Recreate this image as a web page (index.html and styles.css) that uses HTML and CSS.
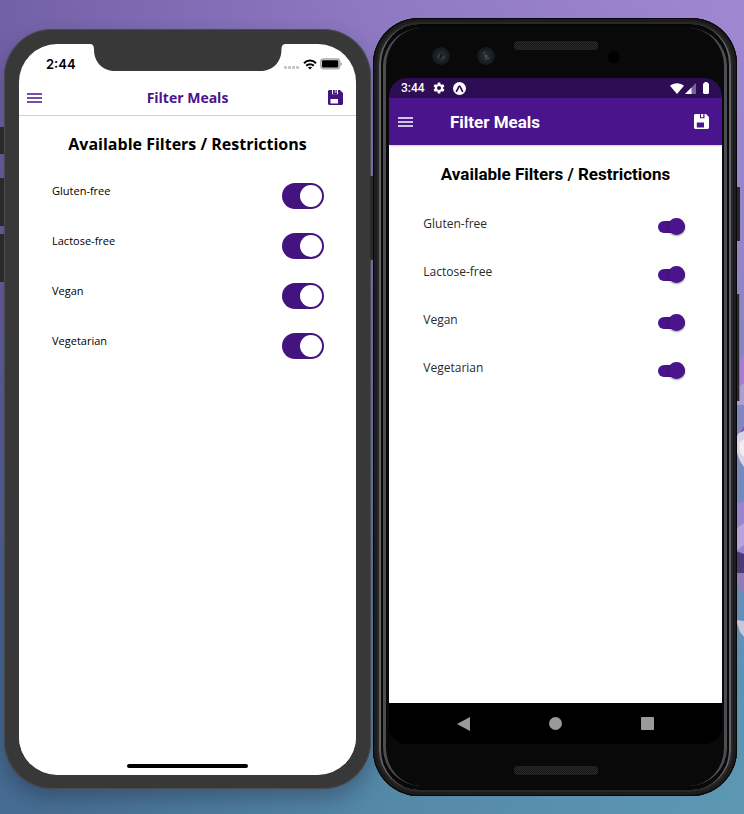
FILE: index.html
```html
<!DOCTYPE html>
<html lang="en">
<head>
<meta charset="utf-8">
<meta name="viewport" content="width=device-width, initial-scale=1">
<title>Filter Meals</title>
<link rel="stylesheet" href="styles.css">
</head>
<body>
<svg class="blossom" viewBox="0 0 10 300" aria-hidden="true">
  <path fill="#aa7bd2" d="M10 10L6 16 4 30 2 36V60H10z"/>
  <path fill="#aaa0cf" d="M2 44L10 38V60H2z"/>
  <path fill="#d9d3ea" d="M10 80L5 88 2 92 3 108 6 116 10 122z"/>
  <path fill="#7c62b4" d="M10 80L5 88 10 86z"/>
  <path fill="#f2ecef" d="M10 94L5 98 6 108 10 112z"/>
  <path fill="#9a84cd" d="M2 158L10 157V210H2z"/>
  <path fill="#b8a2dc" d="M2 184L10 178V200L2 206z"/>
  <path fill="#4e3977" d="M2 206L10 209V228H2z"/>
  <path fill="#8d7db1" d="M2 228H10V248L6 246 2 236z"/>
  <path fill="#c9c6d8" d="M2 275L10 276V292L6 287z"/>
</svg>
<main class="desktop">
  <section class="phone ios" aria-label="iOS">
    <i class="key key-mute"></i><i class="key key-up"></i><i class="key key-down"></i><i class="key key-side"></i>
    <div class="screen">
      <div class="notch"><svg viewBox="0 0 197 27" preserveAspectRatio="none" aria-hidden="true"><path fill="#383838" d="M0 0H197Q193 0 193 5C193 19 184 27 171 27H26C13 27 4 19 4 5Q4 0 0 0Z"/></svg></div>
      <div class="status">
        <span class="clock">2:44</span>
        <div class="indicators">
          <svg width="16" height="4" viewBox="0 0 16 4" fill="#c4c4c4" aria-hidden="true"><rect width="3" height="3" rx="1"/><rect x="4" width="3" height="3" rx="1"/><rect x="8" width="3" height="3" rx="1"/><rect x="12" width="3" height="3" rx="1"/></svg>
          <svg class="wifi" width="14" height="11" viewBox="0 0 14 11" fill="none" stroke="#000" stroke-width="2" aria-hidden="true"><path d="M1 4.2C4.4.7 9.6.7 13 4.2M3.2 6.8C5.3 4.7 8.7 4.7 10.8 6.8"/><path fill="#000" stroke="none" d="M7 10.6L4.9 8.5C6 7.5 8 7.5 9.1 8.5Z"/></svg>
          <svg width="22" height="12" viewBox="0 0 22 12" aria-hidden="true"><rect x=".7" y=".9" width="19" height="10" rx="2.6" fill="#ccc" stroke="#aaa" stroke-width="1.2"/><rect x="2" y="2.3" width="16.2" height="7.2" rx="1.2"/><path fill="#888" d="M20.6 4V8Q21.8 7.4 21.8 6T20.6 4"/></svg>
        </div>
      </div>
      <header class="bar">
        <button class="icon-button" type="button" aria-label="Menu"><svg width="15" height="10" viewBox="0 0 15 10" stroke="#4a148c" stroke-width="1.5" aria-hidden="true"><path d="M0 1H15M0 5H15M0 9H15"/></svg></button>
        <h1>Filter Meals</h1>
        <button class="icon-button" type="button" aria-label="Save"><svg width="15" height="15" viewBox="0 0 15 15" aria-hidden="true"><path fill="#43137f" fill-rule="evenodd" d="M1 0H4V4.300H10V0H12L15 3V14L14 15H1L0 14V1ZM2.500 9V13.500H10V9Z"/><path fill="#43137f" d="M5 0H9V4.300H5Z"/><path fill="#a78fc9" d="M6.500 0H8.500V3H6.500Z"/></svg></button>
      </header>
      <div class="content">
        <h2>Available Filters / Restrictions</h2>
        <div class="filters">
          <div class="filter"><label for="ios-gluten">Gluten-free</label><input id="ios-gluten" type="checkbox" role="switch" checked></div>
          <div class="filter"><label for="ios-lactose">Lactose-free</label><input id="ios-lactose" type="checkbox" role="switch" checked></div>
          <div class="filter"><label for="ios-vegan">Vegan</label><input id="ios-vegan" type="checkbox" role="switch" checked></div>
          <div class="filter"><label for="ios-vegetarian">Vegetarian</label><input id="ios-vegetarian" type="checkbox" role="switch" checked></div>
        </div>
      </div>
      <div class="home-indicator"></div>
    </div>
  </section>

  <section class="phone android" aria-label="Android">
    <i class="key key-left"></i><i class="key key-power"></i><i class="key key-volume"></i>
    <div class="body">
      <div class="forehead">
        <svg class="cameras" width="64" height="20" viewBox="0 0 64 20" aria-hidden="true"><circle cx="9" cy="10" r="9" fill="#171c21"/><circle cx="9" cy="10" r="6" fill="#20262c"/><path d="M6 12L8 8M10 13L12 10" stroke="#41494f" stroke-width="1.500"/><circle cx="9" cy="10" r="1.500" fill="#11161a"/><circle cx="54" cy="10" r="9" fill="#171c21"/><circle cx="54" cy="10" r="6" fill="#20262c"/><path d="M53 13L57 12M51 8L53 6" stroke="#41494f" stroke-width="1.500"/><circle cx="54" cy="10" r="1.500" fill="#50575c"/></svg>
        <div class="speaker"></div>
        <div class="sensor"></div>
      </div>
      <div class="screen">
        <div class="status">
          <span class="clock">3:44</span>
          <svg width="12" height="12" viewBox="0 0 24 24" fill="#fff" aria-hidden="true"><path fill-rule="evenodd" d="M9.5 1h5l.6 3.5 2 1.1 3.3-1.2 2.5 4.3L20.200 11v2l2.700 2.300-2.500 4.300-3.300-1.200-2 1.100-.6 3.500h-5l-.6-3.500-2-1.100-3.300 1.200L1.100 15.300 3.800 13v-2L1.100 8.700l2.500-4.300 3.300 1.200 2-1.100zM12 8a4 4 0 1 0 0 8 4 4 0 0 0 0-8z"/></svg>
          <svg width="13" height="13" viewBox="0 0 13 13" aria-hidden="true"><circle cx="6.500" cy="6.500" r="6.500" fill="#fff"/><path d="M3.500 9.300C4.800 7.700 5.400 4.200 6.500 4.200S8.200 7.700 9.500 9.300" fill="none" stroke="#2d0d54" stroke-width="1.700" stroke-linecap="round"/></svg>
          <div class="indicators">
            <svg width="14" height="11" viewBox="0 0 14 11" aria-hidden="true"><path fill="#fff" d="M0 2.700C4-.700 10-.700 14 2.700L7 11Z"/></svg>
            <svg width="11" height="11" viewBox="0 0 11 11" aria-hidden="true"><path fill="#796593" d="M0 11L11 0V11Z"/><path fill="#fff" d="M0 11L6.500 4.500V11Z"/></svg>
            <svg class="battery" width="6" height="12" viewBox="0 0 6 12" aria-hidden="true"><path fill="#fff" d="M1.500 0H4.500V1H5L6 2V11L5 12H1L0 11V2L1 1H1.500Z"/></svg>
          </div>
        </div>
        <header class="bar">
          <button class="icon-button" type="button" aria-label="Menu"><svg width="15" height="10" viewBox="0 0 15 10" stroke="#fff" stroke-width="1.700" aria-hidden="true"><path d="M0 1H15M0 5H15M0 9H15"/></svg></button>
          <h1>Filter Meals</h1>
          <button class="icon-button" type="button" aria-label="Save"><svg width="15" height="15" viewBox="0 0 15 15" aria-hidden="true"><path fill="#fff" fill-rule="evenodd" d="M1 0H6V4.300H10.500V0H12L15 3V14L14 15H1L0 14V1ZM2.800 8.500V13.500H10V8.500Z"/><path fill="#fff" d="M7 0H9.300V3.300H7Z"/></svg></button>
        </header>
        <div class="content">
          <h2>Available Filters / Restrictions</h2>
          <div class="filters">
            <div class="filter"><label for="android-gluten">Gluten-free</label><input id="android-gluten" type="checkbox" role="switch" checked></div>
            <div class="filter"><label for="android-lactose">Lactose-free</label><input id="android-lactose" type="checkbox" role="switch" checked></div>
            <div class="filter"><label for="android-vegan">Vegan</label><input id="android-vegan" type="checkbox" role="switch" checked></div>
            <div class="filter"><label for="android-vegetarian">Vegetarian</label><input id="android-vegetarian" type="checkbox" role="switch" checked></div>
          </div>
        </div>
        <nav class="nav-bar" aria-label="System">
          <button class="icon-button" type="button" aria-label="Back"><svg width="13" height="14" viewBox="0 0 13 14" aria-hidden="true"><path fill="#9a9a9a" d="M13 0V14L0 7Z"/></svg></button>
          <button class="icon-button" type="button" aria-label="Home"><svg width="13" height="13" viewBox="0 0 13 13" aria-hidden="true"><circle cx="6.500" cy="6.500" r="6.500" fill="#9a9a9a"/></svg></button>
          <button class="icon-button" type="button" aria-label="Recent apps"><svg width="13" height="13" viewBox="0 0 13 13" aria-hidden="true"><rect width="13" height="13" rx="1" fill="#9a9a9a"/></svg></button>
        </nav>
      </div>
      <div class="chin"><div class="speaker"></div></div>
    </div>
  </section>
</main>
</body>
</html>
```
FILE: styles.css
```css
* { box-sizing: border-box; }

body {
  margin: 0;
  position: relative;
  overflow-x: hidden;
  background:
    linear-gradient(90deg, rgba(20, 15, 75, .32), rgba(20, 20, 80, .12) 50%, transparent),
    linear-gradient(180deg, #a087d2 0%, #9484c8 30%, #7f86c0 50%, #6a8bbb 68%, #5a93b4 85%, #5d98b2 100%);
}

h1, h2 { margin: 0; }

.blossom {
  position: absolute;
  right: 0;
  top: 345px;
  width: 10px;
  height: 300px;
}

.desktop {
  position: relative;
  min-height: 100vh;
  display: grid;
  grid-template-columns: 367fr 364fr;
  gap: 2px;
  padding: 0 7px 0 4px;
}

.phone {
  position: relative;
  display: flex;
}

.key {
  position: absolute;
  background: #2a2a2a;
  width: 4px;
}

.screen {
  position: relative;
  flex: 1;
  display: flex;
  flex-direction: column;
  overflow: hidden;
  background: #fff;
}

.status, .bar, .indicators { display: flex; align-items: center; }
.indicators { margin-left: auto; }

.icon-button {
  display: flex;
  padding: 0;
  border: 0;
  background: none;
}

.content {
  flex: 1;
  display: flex;
  flex-direction: column;
  align-items: center;
  background: #fff;
}

.filters {
  width: 80%;
  display: flex;
  flex-direction: column;
}

.filter {
  display: flex;
  justify-content: space-between;
  align-items: flex-start;
}

.filter input {
  appearance: none;
  position: relative;
  margin: 0;
  background: #4a148c;
}

.filter input::before {
  content: "";
  position: absolute;
  border-radius: 50%;
}

/* iOS */
.ios {
  margin: 29px 0 25px;
  padding: 15px 15px 14px;
  border-radius: 48px;
  background: #383838;
  box-shadow: inset 0 0 0 1px #4b4b4f, 0 10px 20px rgba(20, 20, 40, .3);
  font-family: "Open Sans", sans-serif;
}

.ios .key-mute { left: -4px; top: 98px; height: 27px; }
.ios .key-up { left: -4px; top: 149px; height: 48px; }
.ios .key-down { left: -4px; top: 205px; height: 48px; }
.ios .key-side { right: -2px; top: 147px; height: 83px; width: 3px; }

.ios .screen { border-radius: 38px; }

.notch {
  position: absolute;
  top: 0;
  left: 21%;
  right: 21%;
  height: 27px;
}

.notch svg { display: block; width: 100%; height: 100%; }

.ios .status {
  height: 36px;
  padding: 4px 14px 0 27px;
}

.ios .clock { font: 600 13px/16px Inter, sans-serif; }
.ios .indicators { gap: 3px; }
.ios .indicators svg:first-child { margin-top: 8px; }

.ios .bar {
  height: 36px;
  padding: 0 13px 0 8px;
  justify-content: space-between;
  border-bottom: 1px solid #d0d0d2;
}

.ios .bar h1 {
  padding-left: 5px;
  font-size: 14px;
  line-height: 20px;
  font-weight: 700;
  color: #4a148c;
}

.ios h2 {
  margin: 16px 0 27px;
  font-size: 16px;
  line-height: 24px;
  font-weight: 700;
}

.ios .filters { width: 81%; gap: 24px; }

.ios .filter label {
  padding-left: 1px;
  font-size: 11px;
  line-height: 16px;
}

.ios .filter input {
  width: 42px;
  height: 26px;
  border-radius: 13px;
  background: #43137f;
}

.ios .filter input::before {
  top: 2px;
  right: 2px;
  width: 22px;
  height: 22px;
  background: #fff;
}

.home-indicator {
  width: 36%;
  height: 4px;
  margin: 0 auto 7px;
  border-radius: 2px;
  background: #000;
}

/* Android */
.android {
  margin: 18px 0;
  font-family: Roboto, sans-serif;
}

.android .key-left { left: -2px; top: 158px; height: 84px; width: 4px; }
.android .key-power { right: -3px; top: 169px; height: 54px; }
.android .key-volume { right: -3px; top: 276px; height: 107px; border-right: 1px solid #777; }

.body {
  position: relative;
  flex: 1;
  display: flex;
  flex-direction: column;
  padding: 0 15px 0 16px;
  border-radius: 46px;
  background: #090909;
  box-shadow: inset 0 0 0 1px #080808, inset 0 0 0 4px #1c1c1c, inset 0 0 0 6px #282828, inset 0 0 0 7px #050505;
}

.body::before, .body::after {
  content: "";
  position: absolute;
  inset: 6px;
  border: solid #626262;
  border-width: 0 2px;
  border-radius: 40px;
  pointer-events: none;
}

.body::after {
  inset: 10px;
  border-color: #4c4c53;
  border-width: 0 3px;
  border-radius: 38px;
}

.forehead {
  position: relative;
  height: 60px;
  display: flex;
  justify-content: center;
  padding-top: 23px;
}

.speaker {
  width: 84px;
  height: 9px;
  border-radius: 4px;
  background: repeating-conic-gradient(#292929 0 25%, #181818 0 50%) 0 0 / 2px 2px;
}

.cameras { position: absolute; left: 43px; top: 28px; }

.sensor {
  position: absolute;
  right: 102px;
  top: 33px;
  width: 12px;
  height: 12px;
  border-radius: 50%;
  background: #000;
}

.android .screen {
  z-index: 1;
  border-radius: 18px;
  background: #000;
}

.android .status {
  height: 20px;
  padding: 0 13px 0 12px;
  gap: 8px;
  background: #2d0d54;
  color: #fff;
}

.android .clock { font-size: 12px; line-height: 16px; font-weight: 500; }
.android .indicators { gap: 1px; }
.android .battery { margin-left: 6px; }

.android .bar {
  position: relative;
  height: 47px;
  padding: 0 13px 0 9px;
  background: #4a148c;
  box-shadow: 0 1px 2px rgba(0, 0, 0, .2);
  color: #fff;
}

.android .bar h1 {
  flex: 1;
  margin-left: 37px;
  font-size: 17px;
  line-height: 24px;
  font-weight: 700;
}

.android h2 {
  margin: 17px 0 29px;
  font-size: 17px;
  line-height: 24px;
  font-weight: 700;
}

.android .filters { gap: 28px; }

.android .filter { padding: 0 4px 0 1px; }

.android .filter label {
  font-family: "Open Sans", sans-serif;
  font-size: 12px;
  line-height: 18px;
  color: #2a2a2a;
}

.android .filter input {
  width: 27px;
  height: 12px;
  margin: 6px 0 2px;
  border-radius: 6px;
}

.android .filter input::before {
  right: 0;
  top: -3px;
  width: 17px;
  height: 17px;
  background: #4a148c;
  box-shadow: 0 1px 2px rgba(0, 0, 0, .4);
}

.nav-bar {
  height: 41px;
  display: flex;
  justify-content: space-around;
  align-items: center;
  padding: 0 28px;
  background: #000;
}

.chin {
  height: 52px;
  display: flex;
  justify-content: center;
  padding-top: 22px;
}
```
